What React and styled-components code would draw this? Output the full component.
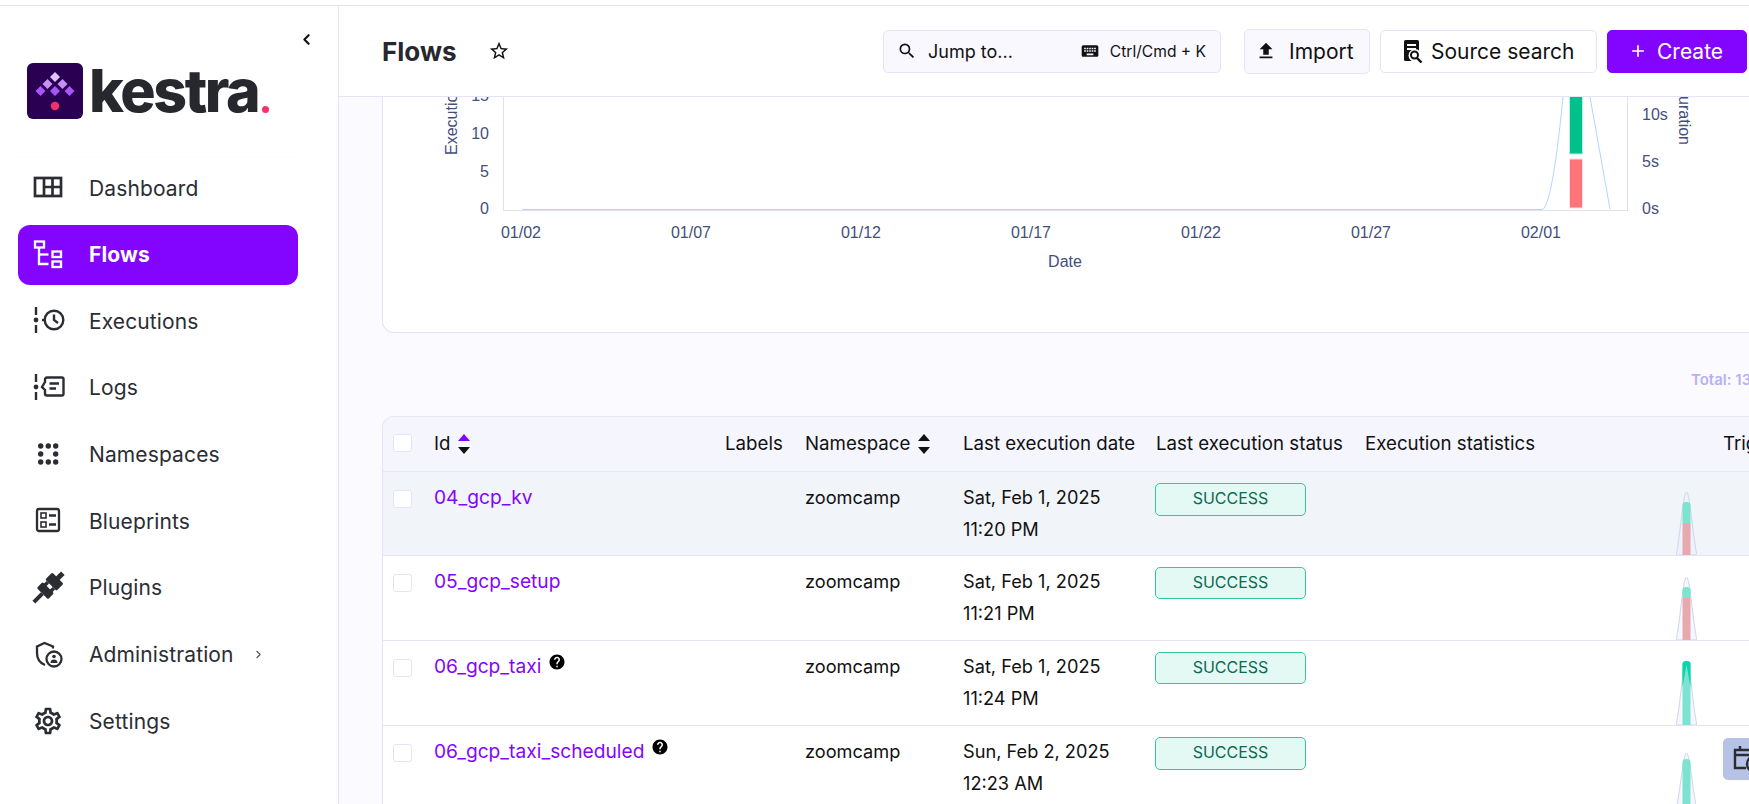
import React from 'react'
import styled, { createGlobalStyle } from 'styled-components'
import {
  MdOutlineSettings,
  MdOutlineStarBorder,
  MdSearch,
  MdKeyboard,
  MdFileUpload,
  MdAdd,
  MdHelp,
} from 'react-icons/md'
import { LuChevronLeft, LuChevronRight } from 'react-icons/lu'

const ink = '#2b2d33'
const line = '#e5e4f7'
const purple = '#8405ff'

const Global = createGlobalStyle`
  html, body { margin: 0; padding: 0; height: 804px; overflow: hidden; background: #fff; }
  * { box-sizing: border-box; }
  body { font-family: Inter, "Noto Sans", sans-serif; color: #111; }
`

const Page = styled.div`
  width: 1749px;
  height: 804px;
  overflow: hidden;
  padding-top: 5px;
`
const TopRule = styled.div`
  height: 1px;
  background: #e4e4ea;
`
const Shell = styled.div`
  display: flex;
  height: 798px;
`
const Sidebar = styled.aside`
  width: 339px;
  flex: none;
  border-right: 1px solid ${line};
  background: #fff;
  padding: 0 40px 0 18px;
`
const Collapse = styled.div`
  display: flex;
  justify-content: flex-end;
  height: 57px;
  padding: 25px 0 0;
  margin-right: -17px;
  color: #111;
`
const Logo = styled.div`
  display: flex;
  align-items: flex-end;
  height: 56px;
  margin-left: 9px;
  gap: 6px;
`
const LogoWord = styled.span`
  font-family: Inter, sans-serif;
  font-weight: 800;
  font-size: 59px;
  letter-spacing: -2.4px;
  line-height: 56px;
  color: #26282d;
  height: 56px;
  margin-top: -6px;
`
const LogoDot = styled.span`
  width: 7px;
  height: 7px;
  border-radius: 50%;
  background: #fc2f68;
  margin: 0 0 6px -2px;
`
const Nav = styled.nav`
  display: grid;
  grid-auto-rows: 60px;
  row-gap: 6.65px;
  margin-top: 38px;
  border-top: 1px solid #fcfcfd;
`
const NavItem = styled.div`
  display: flex;
  align-items: center;
  gap: 27px;
  padding-left: 16px;
  border-radius: 12px;
  font-size: 21px;
  letter-spacing: 0.12px;
  font-weight: ${p => (p.$active ? 700 : 400)};
  color: ${p => (p.$active ? '#fff' : ink)};
  background: ${p => (p.$active ? purple : 'transparent')};
`
const NavIcon = styled.svg`
  width: 28px;
  height: 28px;
  flex: none;
  overflow: visible;
`
const NavChevron = styled.span`
  display: inline-flex;
  margin-left: -9px;
  color: #555;
`
const Main = styled.main`
  flex: 1;
  min-width: 0;
  background: #fafaff;
  display: flex;
  flex-direction: column;
  overflow: hidden;
`
const Topbar = styled.header`
  flex: none;
  height: 91px;
  display: flex;
  align-items: center;
  padding: 0 2px 0 43px;
  background: #fff;
  border-bottom: 1px solid ${line};
`
const Title = styled.h1`
  margin: 0;
  font-size: 26px;
  font-weight: 700;
  color: #26282d;
`
const StarButton = styled.span`
  display: inline-flex;
  margin-left: 31px;
  color: #111;
`
const Actions = styled.div`
  margin-left: auto;
  display: flex;
  align-items: center;
  gap: 10px;
`
const JumpBox = styled.div`
  width: 338px;
  height: 43px;
  display: flex;
  align-items: center;
  padding: 0 14px 0 13px;
  margin-right: 13px;
  background: #f9f8ff;
  border: 1px solid ${line};
  border-radius: 5px;
  font-size: 18px;
  color: #111;
`
const JumpText = styled.span`
  margin-left: 11px;
`
const Shortcut = styled.span`
  margin-left: auto;
  display: flex;
  align-items: center;
  gap: 10px;
  font-size: 15.6px;
`
const Action = styled.button`
  width: ${p => p.$w}px;
  height: ${p => (p.$tall ? 45 : 43)}px;
  display: flex;
  align-items: center;
  gap: ${p => p.$gap}px;
  padding: 0 0 0 ${p => p.$pad}px;
  font-family: inherit;
  font-size: 21px;
  white-space: nowrap;
  border-radius: 5px;
  border: 1px solid ${p => (p.$primary ? purple : line)};
  background: ${p => (p.$primary ? purple : p.$tall ? '#f9f8ff' : '#fff')};
  color: ${p => (p.$primary ? '#fff' : '#111')};
`
const Content = styled.div`
  flex: 1;
  padding-left: 43px;
  width: 1410px;
`
const ChartCard = styled.section`
  height: 236px;
  background: #fff;
  border-left: 1px solid ${line};
  border-bottom: 1px solid ${line};
  border-bottom-left-radius: 12px;
`
const ChartSvg = styled.svg`
  display: block;
  margin-left: -1px;
  font-family: "Liberation Sans", Arial, sans-serif;
  font-size: 16px;
  fill: #434e7c;
`
const TotalRow = styled.div`
  height: 83px;
  padding: 37px 0 0 1309px;
  font-size: 15px;
  font-weight: 600;
  white-space: nowrap;
  color: #b6b1f7;
`
const Table = styled.div`
  border-left: 1px solid ${line};
  border-top: 1px solid ${line};
  border-top-left-radius: 12px;
  overflow: hidden;
  width: 1450px;
`
const Row = styled.div`
  display: grid;
  grid-template-columns: 51px 291px 80px 158px 193px 209px 358px 110px;
  font-size: ${p => (p.$head ? 18.7 : 18.2)}px;
  line-height: 31.5px;
  height: ${p => p.$h}px;
  border-bottom: 1px solid ${line};
  background: ${p => (p.$head ? '#f5f5fe' : p.$hover ? '#f1f4f9' : '#fff')};
  white-space: nowrap;
`
const Cell = styled.div`
  padding-top: ${p => (p.$head ? 11 : 10)}px;
  display: ${p => (p.$head ? 'flex' : 'block')};
  gap: 7px;
`
const Box = styled.span`
  display: block;
  width: 19px;
  height: 18px;
  margin: ${p => (p.$head ? 7 : 7.5)}px 0 0 10px;
  background: #fff;
  border: 1px solid ${line};
  border-radius: 3px;
`
const FlowLink = styled.span`
  color: ${purple};
  font-size: 19.2px;
`
const HelpMark = styled.span`
  display: inline-flex;
  margin-left: 7px;
  vertical-align: 2px;
  color: #000;
`
const Sort = styled.svg`
  width: 14px;
  height: 22px;
  margin-top: 5px;
`
const Badge = styled.span`
  display: block;
  width: 151px;
  height: ${p => p.$h}px;
  margin: 1px 0 0 -1px;
  background: #e4f9f3;
  border: 1px solid #2fc99c;
  border-radius: 5px;
  color: #0c6a53;
  font-size: 16px;
  line-height: 29px;
  text-align: center;
`
const StatCell = styled.div`
  display: flex;
  justify-content: flex-end;
  align-items: flex-end;
  padding-right: 26px;
`
const TriggerChip = styled.div`
  margin-top: 12px;
  width: 60px;
  height: 42px;
  background: #b6c3e6;
  border-radius: 5px;
  display: flex;
  align-items: center;
  padding-left: 9px;
`

const DashboardIcon = () => (
  <NavIcon viewBox="0 0 28 28" fill="none" stroke={ink} strokeWidth="2.7">
    <rect x="1" y="4" width="26" height="18" />
    <path d="M10 4v18M18.500 4v18M10 13h17" />
  </NavIcon>
)
const FlowsIcon = () => (
  <NavIcon viewBox="0 0 28 28" fill="none" stroke="#fff" strokeWidth="2.3">
    <rect x="1" y="0.500" width="9" height="6" />
    <path d="M5 7v16h9.500" />
    <path d="M5 13.500h9.500" />
    <rect x="18.500" y="10.500" width="8.500" height="5.500" />
    <rect x="18.500" y="20.500" width="8.500" height="5.500" />
  </NavIcon>
)
const ExecutionsIcon = () => (
  <NavIcon viewBox="0 0 28 28" fill="none" stroke={ink} strokeWidth="2.4">
    <path d="M2 0v8M2 18v8" />
    <circle cx="2" cy="13" r="2.400" fill={ink} stroke="none" />
    <circle cx="20" cy="13" r="9.300" />
    <path d="M20 7.500V13l4 3" />
    <path d="M8 13h3" />
  </NavIcon>
)
const LogsIcon = () => (
  <NavIcon viewBox="0 0 28 28" fill="none" stroke={ink} strokeWidth="2.400">
    <path d="M2 0v8M2 18v8" />
    <circle cx="2" cy="13" r="2.400" fill={ink} stroke="none" />
    <path d="M11 8V5.500a2 2 0 0 1 2-2h15a1.500 1.500 0 0 1 1.500 1.500v15a1.500 1.500 0 0 1-1.500 1.500H13a2 2 0 0 1-2-2V16l-3-3z" />
    <path d="M15.500 9.500h9.500M15.500 14.500h6.500" />
  </NavIcon>
)
const NamespacesIcon = () => (
  <NavIcon viewBox="0 0 28 28" fill={ink}>
    {[[6.7, 5], [14.3, 5], [21.7, 5], [6.7, 13], [21.7, 13], [6.7, 21], [14.3, 21], [21.7, 21]].map(([cx, cy]) => (
      <circle key={cx + '-' + cy} cx={cx} cy={cy} r="2.700" />
    ))}
  </NavIcon>
)
const BlueprintsIcon = () => (
  <NavIcon viewBox="0 0 28 28" fill="none" stroke={ink} strokeWidth="2.300">
    <rect x="3" y="2" width="22" height="22" rx="2" />
    <rect x="7" y="6" width="5" height="5" strokeWidth="1.600" />
    <rect x="7" y="15" width="5" height="5" strokeWidth="1.600" />
    <path d="M15 8.500h7M15 17.500h7" />
  </NavIcon>
)
const PluginsIcon = () => (
  <NavIcon viewBox="0 0 28 28" fill={ink}>
    <g transform="rotate(45 14 14)">
      <rect x="11.500" y="-7" width="5" height="9" />
      <rect x="6" y="0" width="16" height="10" rx="1.500" />
      <rect x="8" y="10" width="3.500" height="5" />
      <rect x="16.500" y="10" width="3.500" height="5" />
      <rect x="6" y="13.500" width="16" height="8.500" rx="1.500" />
      <rect x="12" y="22" width="4" height="12" />
    </g>
  </NavIcon>
)
const AdminIcon = () => (
  <NavIcon viewBox="0 0 28 28" fill="none" stroke={ink} strokeWidth="2.300">
    <path d="M19 8.500V6.500L10.500 3 3 6.500V13c0 5.500 3 10 8 12" />
    <circle cx="20" cy="19" r="7.500" />
    <circle cx="20" cy="16.500" r="1.800" fill={ink} stroke="none" />
    <path d="M16.500 23c0-2.500 1.500-3.500 3.500-3.500s3.500 1 3.500 3.500z" fill={ink} stroke="none" />
  </NavIcon>
)
const SourceSearchIcon = () => (
  <svg width="20" height="23" viewBox="0 0 20 23">
    <rect x="1" y="0" width="15" height="21" rx="1.500" fill="#111" />
    <path d="M4 5h9M4 9h9" stroke="#fff" strokeWidth="2" />
    <circle cx="12" cy="15.500" r="6.500" fill="#fff" />
    <circle cx="11.500" cy="15" r="3.500" fill="#fff" stroke="#111" strokeWidth="2" />
    <path d="M14 18l4.500 4.500" stroke="#111" strokeWidth="2.400" />
  </svg>
)

const navItems = [
  { label: 'Dashboard', icon: <DashboardIcon /> },
  { label: 'Flows', icon: <FlowsIcon />, active: true },
  { label: 'Executions', icon: <ExecutionsIcon /> },
  { label: 'Logs', icon: <LogsIcon /> },
  { label: 'Namespaces', icon: <NamespacesIcon /> },
  { label: 'Blueprints', icon: <BlueprintsIcon /> },
  { label: 'Plugins', icon: <PluginsIcon /> },
  { label: 'Administration', icon: <AdminIcon />, more: true },
  { label: 'Settings', icon: <MdOutlineSettings size={32} style={{ margin: '0 -2px' }} color={ink} /> },
]

const flows = [
  { id: '04_gcp_kv', date: 'Sat, Feb 1, 2025', time: '11:20 PM', hover: true, rowH: 84, badgeH: 33, spark: { peak: 21, teal: 31, red: 52 } },
  { id: '05_gcp_setup', date: 'Sat, Feb 1, 2025', time: '11:21 PM', rowH: 85, badgeH: 32, spark: { peak: 21, teal: 31, red: 42 } },
  { id: '06_gcp_taxi', help: true, date: 'Sat, Feb 1, 2025', time: '11:24 PM', rowH: 85, badgeH: 32, spark: { peak: 20, teal: 20, strong: true } },
  { id: '06_gcp_taxi_scheduled', help: true, date: 'Sun, Feb 2, 2025', time: '12:23 AM', rowH: 85, badgeH: 33, trigger: true, spark: { peak: 27, teal: 33 } },
]

const Logomark = () => (
  <svg width="56" height="56" viewBox="0 0 56 56">
    <rect width="56" height="56" rx="6" fill="#2a0052" />
    <path d="M28 9l5 5-5 5-5-5z" fill="#e3c4ff" />
    <path d="M20.500 16l5 5-5 5-5-5zM35.500 16l5 5-5 5-5-5z" fill="#c78ff7" />
    <path d="M13.500 23l5 5-5 5-5-5zM28 23l5 5-5 5-5-5zM42.500 23l5 5-5 5-5-5z" fill="#a855f7" />
    <circle cx="28" cy="43" r="4.200" fill="#fc2f68" />
  </svg>
)

const SortArrows = ({ up }) => (
  <Sort viewBox="0 0 14 22">
    <path d="M7 1l6 7H1z" fill={up ? purple : '#111'} />
    <path d="M7 21l6-7H1z" fill="#111" />
  </Sort>
)

const Spark = ({ peak, teal, red, strong }) => {
  const h = 84 - peak
  const t = teal - peak
  const r = red ? red - peak : h
  return (
    <svg width="21" height={h} viewBox={`0 0 21 ${h}`}>
      <path d={`M0 ${h}C4 ${h - 16} 7 0 10.500 0S17 ${h - 16} 21 ${h}z`} fill="#e9edf8" fillOpacity=".45" stroke="#cfd6ea" />
      <path d={`M6.500 ${r}V${t + 3}a4 3 0 0 1 8 0V${r}z`} fill="#7be3d0" />
      {strong && <path d={`M6.500 ${t + 26}V${t + 3}a4 3 0 0 1 8 0V${t + 26}l-4-22z`} fill="#08d4ae" />}
      {red && <rect x="6.500" y={r} width="8" height={h - r} fill="#e8a9ae" />}
    </svg>
  )
}

const Chart = () => (
  <ChartSvg width="1368" height="235" viewBox="382 97 1368 235">
    <path d="M503.500 97v113M1627.500 97v113M503 210.500h1125" stroke="#e1e1e6" fill="none" />
    <path d="M522 209.500h1020c8 0 16-60 21-113M1590 97l20 112" stroke="#b3d4ff" fill="none" />
    <rect x="1569.500" y="90" width="13" height="64" fill="#00c08b" stroke="#b9efdf" />
    <rect x="1569.500" y="159" width="13" height="49" fill="#ff737a" stroke="#ffe0e2" />
    <text transform="rotate(-90 457 155)" x="457" y="155">Executions</text>
    <text transform="rotate(90 1679 145)" x="1679" y="145" textAnchor="end">Duration</text>
    {[[15, 101], [10, 139], [5, 177], [0, 214]].map(([v, y]) => (
      <text key={v} x="489" y={y} textAnchor="end">{v}</text>
    ))}
    {[['10s', 120], ['5s', 167], ['0s', 214]].map(([v, y]) => (
      <text key={v} x="1642" y={y}>{v}</text>
    ))}
    {[['01/02', 521], ['01/07', 691], ['01/12', 861], ['01/17', 1031], ['01/22', 1201], ['01/27', 1371], ['02/01', 1541]].map(([v, x]) => (
      <text key={v} x={x} y="238" textAnchor="middle">{v}</text>
    ))}
    <text x="1065" y="267" textAnchor="middle">Date</text>
  </ChartSvg>
)

const App = () => (
  <Page>
    <Global />
    <TopRule />
    <Shell>
      <Sidebar>
        <Collapse>
          <LuChevronLeft size={17} strokeWidth={3} />
        </Collapse>
        <Logo>
          <Logomark />
          <LogoWord>kestra</LogoWord>
          <LogoDot />
        </Logo>
        <Nav>
          {navItems.map(item => (
            <NavItem key={item.label} $active={item.active}>
              {item.icon}
              {item.label}
              {item.more && (
                <NavChevron>
                  <LuChevronRight size={13} />
                </NavChevron>
              )}
            </NavItem>
          ))}
        </Nav>
      </Sidebar>
      <Main>
        <Topbar>
          <Title>Flows</Title>
          <StarButton>
            <MdOutlineStarBorder size={22} />
          </StarButton>
          <Actions>
            <JumpBox>
              <MdSearch size={20} />
              <JumpText>Jump to...</JumpText>
              <Shortcut>
                <MdKeyboard size={20} />
                Ctrl/Cmd + K
              </Shortcut>
            </JumpBox>
            <Action $tall $w={126} $pad={10} $gap={12}>
              <MdFileUpload size={22} />
              Import
            </Action>
            <Action $w={217} $pad={22} $gap={8}>
              <SourceSearchIcon />
              Source search
            </Action>
            <Action $primary $w={140} $pad={20} $gap={9}>
              <MdAdd size={20} />
              Create
            </Action>
          </Actions>
        </Topbar>
        <Content>
          <ChartCard>
            <Chart />
          </ChartCard>
          <TotalRow>Total: 13</TotalRow>
          <Table>
            <Row $head $h={55}>
              <Cell><Box $head /></Cell>
              <Cell $head>Id <SortArrows up /></Cell>
              <Cell $head>Labels</Cell>
              <Cell $head>Namespace <SortArrows /></Cell>
              <Cell $head>Last execution date</Cell>
              <Cell $head>Last execution status</Cell>
              <Cell $head>Execution statistics</Cell>
              <Cell $head>Triggers</Cell>
            </Row>
            {flows.map(flow => (
              <Row key={flow.id} $hover={flow.hover} $h={flow.rowH}>
                <Cell><Box /></Cell>
                <Cell>
                  <FlowLink>{flow.id}</FlowLink>
                  {flow.help && (
                    <HelpMark>
                      <MdHelp size={18} />
                    </HelpMark>
                  )}
                </Cell>
                <Cell />
                <Cell>zoomcamp</Cell>
                <Cell>
                  {flow.date}
                  <br />
                  {flow.time}
                </Cell>
                <Cell>
                  <Badge $h={flow.badgeH}>SUCCESS</Badge>
                </Cell>
                <StatCell>
                  <Spark {...flow.spark} />
                </StatCell>
                <div>
                  {flow.trigger && (
                    <TriggerChip>
                      <svg width="34" height="30" viewBox="0 0 34 30" fill="none" stroke={ink} strokeWidth="2.4">
                        <path d="M14 24H3V6h22v6M3 11h22M8 2v5M20 2v5" />
                        <circle cx="23" cy="20" r="8" />
                      </svg>
                    </TriggerChip>
                  )}
                </div>
              </Row>
            ))}
          </Table>
        </Content>
      </Main>
    </Shell>
  </Page>
)

export default App
